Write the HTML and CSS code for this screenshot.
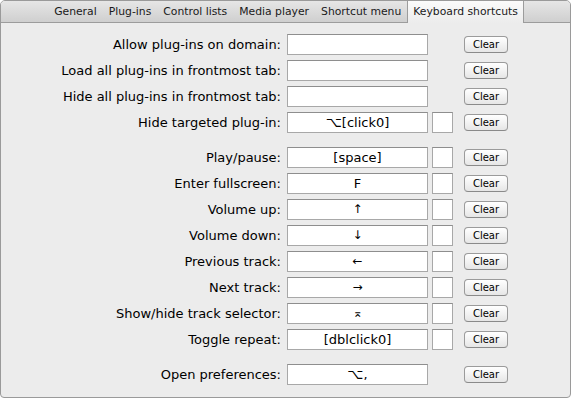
FILE: index.html
```html
<!DOCTYPE html>
<html lang="en">
<head>
    <meta charset="UTF-8">
    <title>Keyboard shortcuts</title>
    <link rel="stylesheet" href="styles.css">
</head>
<body>
    <div class="window">
        <div class="tabs">
            <span class="tab">General</span>
            <span class="tab">Plug-ins</span>
            <span class="tab">Control lists</span>
            <span class="tab">Media player</span>
            <span class="tab">Shortcut menu</span>
            <span class="tab active">Keyboard shortcuts</span>
        </div>

        <div class="panel">
            <div class="group">
                <div class="row">
                    <label class="label">Allow plug-ins on domain:</label>
                    <div class="key"></div>
                    <div class="mod hidden"></div>
                    <button class="clear">Clear</button>
                </div>
                <div class="row">
                    <label class="label">Load all plug-ins in frontmost tab:</label>
                    <div class="key"></div>
                    <div class="mod hidden"></div>
                    <button class="clear">Clear</button>
                </div>
                <div class="row">
                    <label class="label">Hide all plug-ins in frontmost tab:</label>
                    <div class="key"></div>
                    <div class="mod hidden"></div>
                    <button class="clear">Clear</button>
                </div>
                <div class="row">
                    <label class="label">Hide targeted plug-in:</label>
                    <div class="key"><span class="opt">⌥</span>[click0]</div>
                    <div class="mod"></div>
                    <button class="clear">Clear</button>
                </div>
            </div>

            <div class="group">
                <div class="row">
                    <label class="label">Play/pause:</label>
                    <div class="key">[space]</div>
                    <div class="mod"></div>
                    <button class="clear">Clear</button>
                </div>
                <div class="row">
                    <label class="label">Enter fullscreen:</label>
                    <div class="key">F</div>
                    <div class="mod"></div>
                    <button class="clear">Clear</button>
                </div>
                <div class="row">
                    <label class="label">Volume up:</label>
                    <div class="key arrow">↑</div>
                    <div class="mod"></div>
                    <button class="clear">Clear</button>
                </div>
                <div class="row">
                    <label class="label">Volume down:</label>
                    <div class="key arrow">↓</div>
                    <div class="mod"></div>
                    <button class="clear">Clear</button>
                </div>
                <div class="row">
                    <label class="label">Previous track:</label>
                    <div class="key arrow">←</div>
                    <div class="mod"></div>
                    <button class="clear">Clear</button>
                </div>
                <div class="row">
                    <label class="label">Next track:</label>
                    <div class="key arrow">→</div>
                    <div class="mod"></div>
                    <button class="clear">Clear</button>
                </div>
                <div class="row">
                    <label class="label">Show/hide track selector:</label>
                    <div class="key arrow">⌅</div>
                    <div class="mod"></div>
                    <button class="clear">Clear</button>
                </div>
                <div class="row">
                    <label class="label">Toggle repeat:</label>
                    <div class="key">[dblclick0]</div>
                    <div class="mod"></div>
                    <button class="clear">Clear</button>
                </div>
            </div>

            <div class="group">
                <div class="row">
                    <label class="label">Open preferences:</label>
                    <div class="key"><span class="opt">⌥</span>,</div>
                    <div class="mod hidden"></div>
                    <button class="clear">Clear</button>
                </div>
            </div>
        </div>
    </div>
</body>
</html>
```

FILE: styles.css
```css
body {
    margin: 0;
    background-color: #ffffff;
    font-family: "DejaVu Sans", sans-serif;
    color: #000;
}
.window {
    width: 571px;
    height: 398px;
    box-sizing: border-box;
    border: 1px solid #9a9a9a;
    border-radius: 5px 5px 4px 4px;
    background-color: #ececec;
    overflow: hidden;
}
.tabs {
    height: 21px;
    display: flex;
    justify-content: center;
    align-items: stretch;
    background: linear-gradient(#e6e6e6, #cfcfcf);
    border-bottom: 1px solid #9c9c9c;
    padding-left: 1px;
}
.tab {
    font-size: 10.8px;
    color: #1a1a1a;
    padding: 0 6px;
    line-height: 21px;
}
.tab.active {
    background: linear-gradient(#fbfbfb, #ececec);
    border-left: 1px solid #9c9c9c;
    border-right: 1px solid #9c9c9c;
    margin-bottom: -1px;
    padding: 0 5px 0 5px;
    line-height: 22px;
}
.panel {
    padding-top: 11px;
    display: flex;
    flex-direction: column;
    gap: 14px;
}
.group {
    display: flex;
    flex-direction: column;
    gap: 5px;
}
.row {
    display: flex;
    align-items: center;
    height: 21px;
}
.label {
    width: 280px;
    text-align: right;
    font-size: 13px;
    margin-right: 6px;
}
.key {
    width: 141px;
    height: 21px;
    box-sizing: border-box;
    background-color: #fff;
    border: 1px solid #a8a8a8;
    border-top-color: #8e8e8e;
    text-align: center;
    font-size: 13px;
    line-height: 19px;
}
.key.arrow {
    font-size: 12px;
}
.opt {
    font-size: 14px;
}
.mod {
    width: 21px;
    height: 21px;
    box-sizing: border-box;
    margin-left: 4px;
    background-color: #fff;
    border: 1px solid #a8a8a8;
    border-top-color: #8e8e8e;
}
.mod.hidden {
    visibility: hidden;
}
.clear {
    margin-left: 11px;
    width: 44px;
    height: 17px;
    padding: 0;
    font-family: "DejaVu Sans", sans-serif;
    font-size: 10px;
    color: #000;
    border: 1px solid #9b9b9b;
    border-bottom-color: #8a8a8a;
    border-radius: 4px;
    background: linear-gradient(#ffffff, #f3f3f3 50%, #e6e6e6);
}
```
